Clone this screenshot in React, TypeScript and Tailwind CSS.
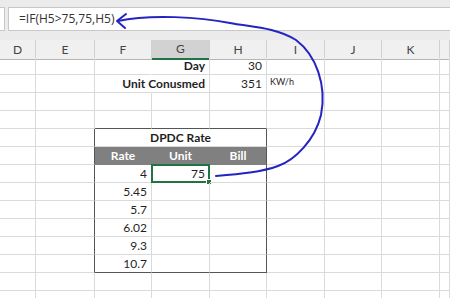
import React from 'react';

const GRID = 'grid grid-cols-[36px_59px_57px_58px_57px_58px_57px_58px_1fr]';

type B = 'l' | 'd' | 'g' | 'n';
type Spec = {
  t?: string;
  a?: 'l' | 'r' | 'c';
  b?: boolean;
  span?: boolean;
  skip?: boolean;
  r?: B;
  bb?: B;
  head?: boolean;
  small?: boolean;
  sel?: boolean;
};

const RIGHT: Record<B, string> = {
  l: 'border-r-[#dadada]',
  d: 'border-r-[#555555]',
  g: 'border-r-[#808080]',
  n: 'border-r-transparent',
};
const BOTTOM: Record<B, string> = {
  l: 'border-b-[#dadada]',
  d: 'border-b-[#555555]',
  g: 'border-b-[#808080]',
  n: 'border-b-transparent',
};

function row(over: Record<number, Spec>): Spec[] {
  const cells: Spec[] = [];
  for (let i = 0; i < 9; i++) cells.push({ ...(over[i] || {}) });
  cells.forEach((c, i) => {
    if (c.span) {
      cells[i + 1].skip = true;
      cells[i + 2].skip = true;
    }
  });
  return cells;
}

const head = (t: string, r: B): Spec => ({ t, a: 'c', b: true, head: true, r, bb: 'g' });
const side = { 1: { r: 'd' as B } };

const rows: Spec[][] = [
  row({ 2: { r: 'n' }, 3: { t: 'Day', a: 'r', b: true }, 4: { t: '30', a: 'r' } }),
  row({ 2: { r: 'n' }, 3: { t: 'Unit Conusmed', a: 'r', b: true }, 4: { t: '351', a: 'r' }, 5: { t: 'KW/h', small: true } }),
  row({}),
  row({ 2: { bb: 'd' }, 3: { bb: 'd' }, 4: { bb: 'd' } }),
  row({ ...side, 2: { span: true, t: 'DPDC Rate', a: 'c', b: true, r: 'd' } }),
  row({ ...side, 2: head('Rate', 'g'), 3: head('Unit', 'g'), 4: head('Bill', 'd') }),
  row({ ...side, 2: { t: '4', a: 'r' }, 3: { t: '75', a: 'r', sel: true }, 4: { r: 'd' } }),
  row({ ...side, 2: { t: '5.45', a: 'r' }, 4: { r: 'd' } }),
  row({ ...side, 2: { t: '5.7', a: 'r' }, 4: { r: 'd' } }),
  row({ ...side, 2: { t: '6.02', a: 'r' }, 4: { r: 'd' } }),
  row({ ...side, 2: { t: '9.3', a: 'r' }, 4: { r: 'd' } }),
  row({ ...side, 2: { t: '10.7', a: 'r', bb: 'd' }, 3: { bb: 'd' }, 4: { r: 'd', bb: 'd' } }),
  row({}),
  row({}),
];

const letters = ['D', 'E', 'F', 'G', 'H', 'I', 'J', 'K', ''];

function Cell({ c }: { c: Spec }) {
  const align = c.a === 'r' ? 'justify-end pr-[4px]' : c.a === 'c' ? 'justify-center' : 'justify-start pl-[3px]';
  return (
    <div
      className={`relative flex items-end pb-[1px] whitespace-nowrap border-r border-b ${RIGHT[c.r || 'l']} ${BOTTOM[c.bb || 'l']} ${align} ${
        c.span ? 'col-span-3' : ''
      } ${c.head ? 'bg-[#808080] text-white' : 'text-[#1f1f1f]'} ${c.b ? 'font-bold' : ''} ${
        c.small ? 'text-[9px] pb-[3px]' : 'text-[12px]'
      }`}
    >
      {c.sel && (
        <div className="absolute -inset-[1px] border-2 border-[#217346]">
          <div className="absolute -right-[4px] -bottom-[4px] w-[6px] h-[6px] bg-[#217346] border border-white" />
        </div>
      )}
      <span className="relative leading-[14px]">{c.t}</span>
    </div>
  );
}

export default function App() {
  return (
    <div className="relative w-[450px] h-[298px] overflow-hidden bg-white font-['Lato',sans-serif]">
      {/* Formula bar */}
      <div className="h-[40px] bg-[#ebebeb] pt-[7px] flex gap-[3px]">
        <div className="w-[5px] h-[24px] bg-white border border-l-0 border-[#c8c8c8]" />
        <div className="flex-1 h-[24px] bg-white border border-r-0 border-[#c8c8c8] flex items-center pl-[10px] text-[12px] text-[#333] font-['Open_Sans',sans-serif]">
          =IF(H5&gt;75,75,H5)
        </div>
      </div>

      {/* Column headers */}
      <div className={`${GRID} h-[17px]`}>
        {letters.map((l, i) => (
          <div
            key={i}
            className={`flex items-center justify-center text-[12px] text-[#444] border-r border-r-[#d0d0d0] ${
              l === 'G' ? 'bg-[#d2d2d2] border-b-2 border-b-[#217346]' : 'bg-[#f0f0f0] border-b border-b-[#b5b5b5]'
            }`}
          >
            {l}
          </div>
        ))}
      </div>

      {/* Sheet rows */}
      {rows.map((cells, ri) => (
        <div key={ri} className={`${GRID} h-[18px]`}>
          {cells.map((c, ci) => (c.skip ? null : <Cell key={ci} c={c} />))}
        </div>
      ))}

      {/* Hand-drawn arrow */}
      <svg className="absolute inset-0 pointer-events-none" width="450" height="298" viewBox="0 0 450 298">
        <path
          d="M216,176 C240,174 262,172 278,166 C295,160 315,140 321,115 C327,85 316,55 296,40 C275,27 250,27 230,23 C200,17 150,14 118,21"
          fill="none"
          stroke="#2424c0"
          strokeWidth="2"
          strokeLinecap="round"
        />
        <path d="M126,14 L117,21 L125,28" fill="none" stroke="#2424c0" strokeWidth="2" strokeLinecap="round" strokeLinejoin="round" />
      </svg>
    </div>
  );
}
